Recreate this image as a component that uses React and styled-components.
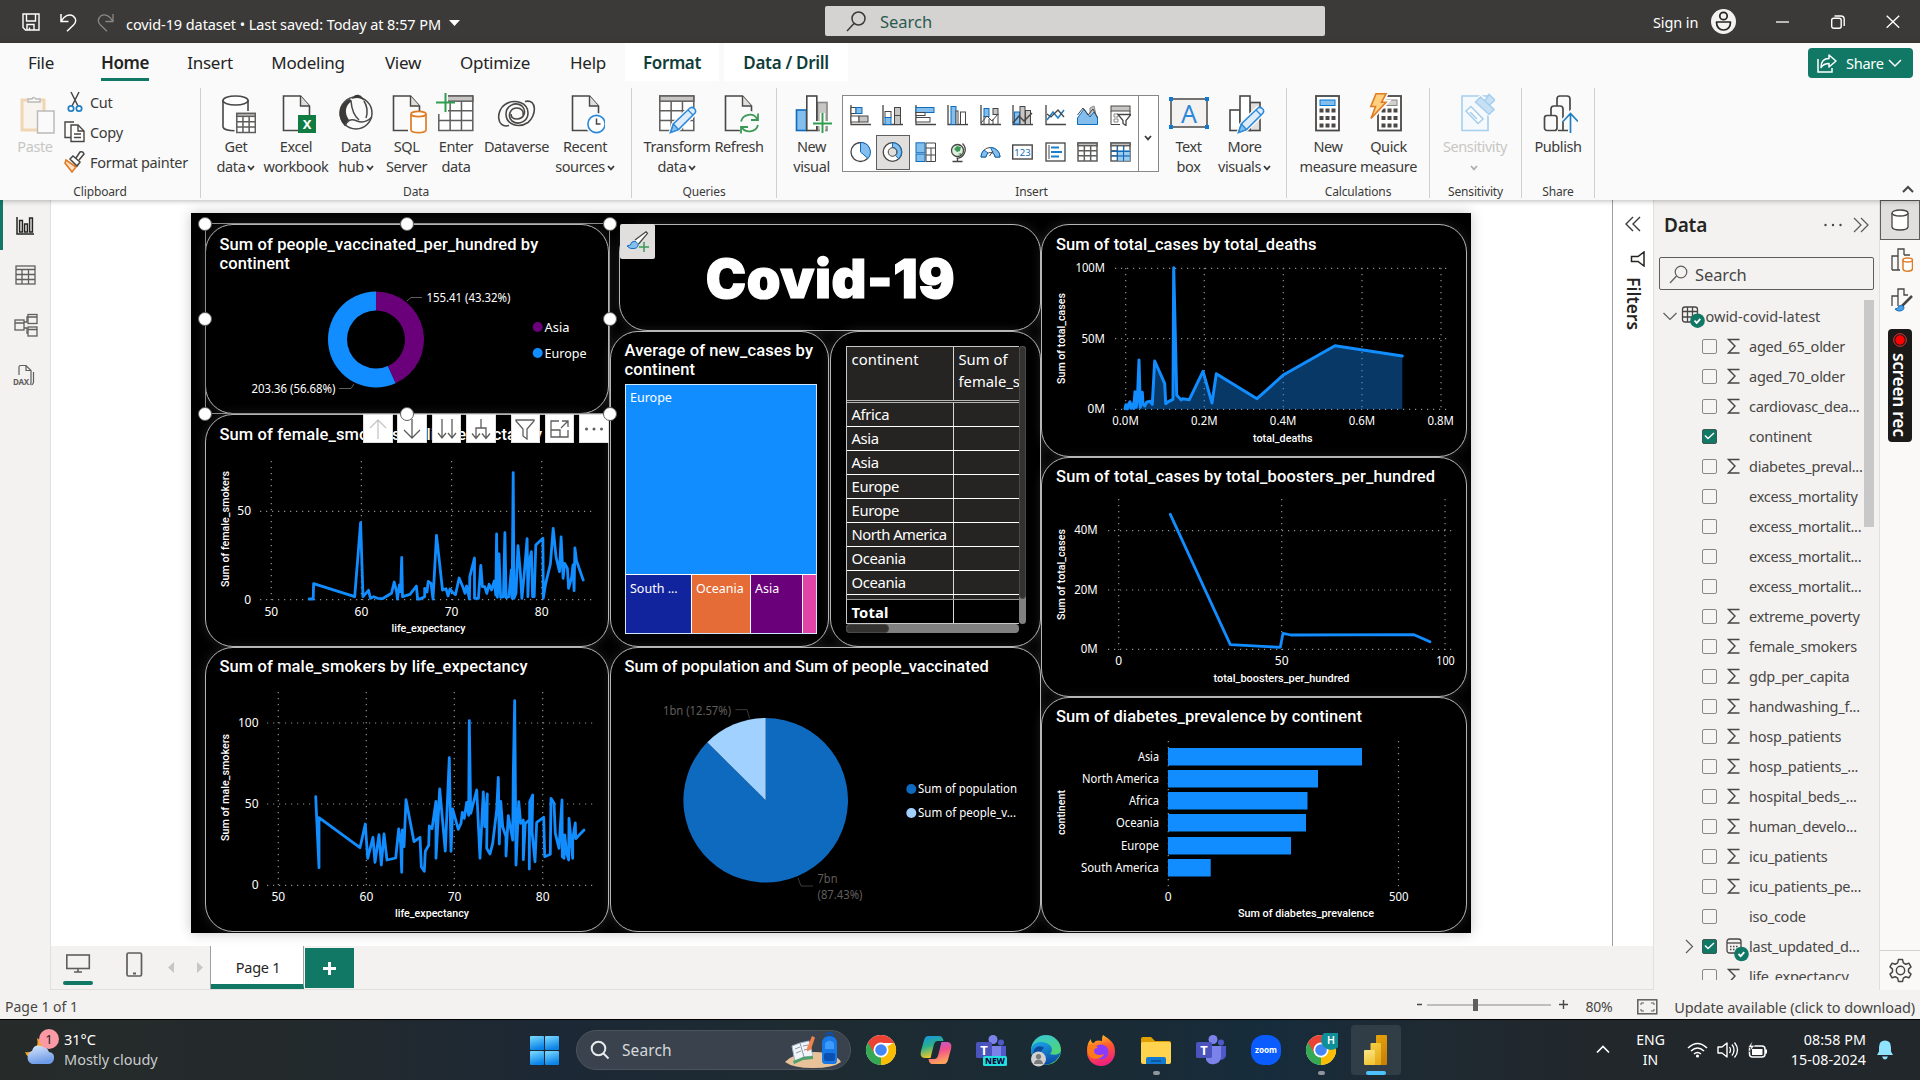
import React from "react";
import styled, { createGlobalStyle, css } from "styled-components";

const UI = `"Noto Sans", "Open Sans", sans-serif`;
const DIN = `Roboto, "Noto Sans", sans-serif`;
const BLUE = "#118dff";
const GREEN = "#117865";

const Global = createGlobalStyle`
  * { box-sizing: border-box; }
  html, body { margin: 0; padding: 0; overflow: hidden; background: #fff; }
  body { font-family: ${UI}; color: #252423; }
  svg { display: block; flex: none; }
`;

const Screen = styled.div`
  width: 1920px; height: 1080px; display: flex; flex-direction: column; overflow: hidden;
`;
const Label = styled.span`
  font-size: ${(p) => p.$size || 14.5}px;
  font-weight: ${(p) => p.$weight || 400};
  letter-spacing: ${(p) => p.$ls || 0}px;
  color: ${(p) => p.$color || "inherit"};
  margin-left: ${(p) => p.$ml || 0}px;
  line-height: 20px; white-space: nowrap;
`;
const Spacer = styled.div`flex: ${(p) => (p.$w || p.$h ? "none" : 1)}; width: ${(p) => (p.$w ? p.$w + "px" : "auto")}; height: ${(p) => (p.$h ? p.$h + "px" : "auto")};`;

const Svg = ({ w, h, children, vb }) => (
  <svg width={w} height={h} viewBox={vb || `0 0 ${w} ${h}`} fill="none">{children}</svg>
);

/* ---------- title bar ---------- */
const TitleBar = styled.header`
  height: 43px; flex: none; background: #3b3a38; color: #fff; display: flex; align-items: center;
`;
const TitleIcons = styled.div`display: flex; width: 104px; gap: 20px; padding-top: 2px; margin: 0 0 0 22px;`;
const TitleText = styled.div`display: flex; align-items: center; gap: 8px; width: 699px; padding-top: 5px;`;
const TitleSearch = styled.div`
  width: 500px; height: 30px; margin-bottom: 1px; background: #d4d3d1; border-radius: 2px; display: flex; align-items: center;
  padding: 1px 0 0 21px; gap: 14px; color: #2b5a50;
`;
const WindowTools = styled.div`display: flex; align-items: center; flex: 1; padding-left: 328px;`;

function Header() {
  return (
    <TitleBar>
      <TitleIcons>
        <Svg w={18} h={18}><g stroke="#fff" strokeWidth="1.4"><path d="M1 1h16v16H3.5L1 14.5z" /><path d="M4.5 1v7h9V1M5 17v-5.500h7V17M7.500 17v-2.500" /></g></Svg>
        <Svg w={17} h={19}><path d="M1 1v7.500h7.500M1.400 8 C4 3 9 .5 13 2.800 C17 6 16 9.500 13.500 12 L7 18.300" stroke="#fff" strokeWidth="1.500" /></Svg>
        <Svg w={17} h={19}><path d="M16 1v7.500H8.500M15.600 8 C13 3 8 .5 4 2.800 C0 6 1 9.500 3.500 12 L10 18.300" stroke="#8a8886" strokeWidth="1.300" /></Svg>
      </TitleIcons>
      <TitleText>
        <Label $size={14.5} $ls={-0.08}>covid-19 dataset • Last saved: Today at 8:57 PM</Label>
        <Svg w={11} h={10}><path d="M0 1h11l-5.500 6z" fill="#fff" /></Svg>
      </TitleText>
      <TitleSearch>
        <Svg w={20} h={21}><circle cx="12.500" cy="7.500" r="6.500" stroke="#3b3a38" strokeWidth="1.500" /><path d="M8 12.500L1 20" stroke="#3b3a38" strokeWidth="1.500" /></Svg>
        <Label $size={16.5}>Search</Label>
      </TitleSearch>
      <WindowTools>
        <Label $size={14.5} $ls={-0.1}>Sign in</Label>
        <Spacer $w={13} />
        <Svg w={25} h={25}><circle cx="12.500" cy="12.500" r="12.500" fill="#f3f2f1" /><g stroke="#252423" strokeWidth="1.700"><circle cx="12.500" cy="7" r="3.700" /><path d="M5.500 13h14c0 5-2.800 8-7 8s-7-3-7-8z" strokeLinejoin="round" /></g></Svg>
        <Spacer $w={40} />
        <Svg w={13} h={13}><path d="M0 7h13" stroke="#fff" strokeWidth="1.300" /></Svg>
        <Spacer $w={42} />
        <Svg w={14} h={14}><g stroke="#fff" strokeWidth="1.400"><rect x=".7" y="3.300" width="9.500" height="10" rx="2" /><path d="M3.500 1h6.500a3.200 3.200 0 0 1 3.200 3.200V11" /></g></Svg>
        <Spacer $w={41} />
        <Svg w={14} h={13}><path d="M.7.7l12.500 12M13.200.7L.7 12.700" stroke="#fff" strokeWidth="1.400" /></Svg>
      </WindowTools>
    </TitleBar>
  );
}

/* ---------- ribbon ---------- */
const Ribbon = styled.div`height: 157px; flex: none; background: #fafafa; display: flex; flex-direction: column; position: relative; z-index: 2; box-shadow: 0 1px 5px rgba(0,0,0,.28);`;
const TabRow = styled.nav`height: 41px; display: flex; align-items: stretch;`;
const Tab = styled.div`
  width: ${(p) => p.$w}px; margin-left: ${(p) => p.$gap || 0}px; height: 38px; display: flex; justify-content: center; align-items: center; padding-top: 1px;
  background: ${(p) => (p.$context ? "#fff" : "transparent")};
  color: ${(p) => (p.$context ? "#0f3d38" : "#252423")};
  box-shadow: ${(p) => (p.$active ? `inset 0 -3px 0 ${GREEN}` : "none")};
`;
const ShareButton = styled.button`
  width: 105px; height: 30px; margin: 5px 7px 0 auto; background: ${GREEN}; border: 0; border-radius: 4px; color: #fff; font-family: inherit;
  display: flex; align-items: center; padding: 0 0 0 9px; gap: 4px;
`;
const Groups = styled.div`height: 116px; display: flex; padding-top: 4px;`;
const Group = styled.section`
  width: ${(p) => p.$w}px; height: 110px; border-right: 1px solid #d2d0ce; display: flex; flex-direction: column;
  flex: none;
`;
const GroupBody = styled.div`display: flex; height: 94px; padding-left: ${(p) => p.$pl || 0}px;`;
const GroupName = styled.div`font-size: 12px; letter-spacing: -.15px; line-height: 16px; height: 16px; text-align: center; color: #3b3a39; padding-top: 2px;`;
const Big = styled.div`
  width: ${(p) => p.$w}px; margin-left: ${(p) => p.$ml || 0}px; flex: none; display: flex; flex-direction: column; align-items: center; padding-top: 5px; color: ${(p) => (p.$off ? "#c8c6c4" : "#3b3a39")};
`;
const BigText = styled.div`
  font-size: 14.5px; letter-spacing: -.4px; line-height: 20px; white-space: nowrap; text-align: center; margin-top: 2px;
`;
const SmallStack = styled.div`display: flex; flex-direction: column; padding-top: 0; margin-left: 6px;`;
const Small = styled.div`height: 30px; display: flex; align-items: center; gap: 4px; color: #3b3a39; padding-bottom: 2px;`;

const CaretIcon = styled.svg`&& { display: inline-block; margin-left: ${(p) => p.$ml}px; vertical-align: 1px; }`;
const Caret = ({ c = "#3b3a39", ml = 2 }) => (
  <CaretIcon $ml={ml} width="8" height="6" viewBox="0 0 8 6"><path d="M1 1l3 3.300L7 1" stroke={c} strokeWidth="1.800" fill="none" /></CaretIcon>
);
function Btn({ w, ml, icon, lines, caret, off }) {
  return (
    <Big $w={w} $ml={ml} $off={off}>
      <Svg w={40} h={41}>{icon}</Svg>
      <BigText>
        {lines[0]}<br />{lines[1]}{caret && <Caret c={off ? "#b0aeac" : undefined} ml={off ? -1 : 2} />}
      </BigText>
    </Big>
  );
}

const D = "#4a4846";
const page = (x) => (<><path d={`M${x} 3h17l9 10v24.500h-26z`} fill="#fafafa" stroke={D} strokeWidth="1.600" /><path d={`M${x + 17} 3v10h9`} stroke={D} strokeWidth="1.400" fill="#e1dfdd" /></>);
const tableGrid = (x, y, w, h) => (
  <g stroke="#605e5c" strokeWidth="1.500">
    <rect x={x} y={y} width={w} height={h} fill="#fff" />
    <rect x={x} y={y} width={w} height={h * 0.15} fill="#c8c6c4" />
    <path d={`M${x} ${y + h * 0.43}h${w}M${x} ${y + h * 0.71}h${w}M${x + w / 3} ${y + h * 0.15}v${h * 0.85}M${x + (2 * w) / 3} ${y + h * 0.15}v${h * 0.85}`} />
  </g>
);
const pencil = (
  <g>
    <path d="M13.500 40l2.500-8.500L32 15.500l5.500 5.500L21.500 36.500z" fill="#fafafa" stroke="#fafafa" strokeWidth="4" />
    <path d="M13.500 39.500l2.800-8.500L33 15q2-1.500 4.300.500t.7 4.500L21.500 36.500z" fill="#deecf9" stroke="#2b88d8" strokeWidth="1.500" />
    <path d="M16.500 31l5 5.500-8 3zM31 17l5 5" stroke="#2b88d8" strokeWidth="1.300" fill="#83beec" />
  </g>
);
const calc = (x, top) => (
  <g>
    <rect x={x} y={3} width={23} height={34.500} fill="#fff" stroke={D} strokeWidth="1.800" />
    <rect x={x + 4} y={7} width={15} height={5.500} fill={top} stroke={top === "#83beec" ? "#0078d4" : "#8a8886"} />
    {[15.500, 23, 30.500].map((y) => [0, 1, 2].map((i) => <rect key={y + "-" + i} x={x + 3.500 + i * 6} y={y} width="4" height="4" fill={D} />))}
  </g>
);
const IC = {
  paste: (<g opacity=".75"><path d="M7 7h22v30H7z" stroke="#f0c99a" strokeWidth="3" fill="#f7f3ec" /><path d="M13 9V6h4q1-3 4 0h4v3z" stroke="#a8a6a4" strokeWidth="1.500" fill="#fafafa" /><path d="M22.500 18H39v22H22.500z" fill="#fafafa" stroke="#a8a6a4" strokeWidth="1.500" /></g>),
  getData: (<><path d="M7 7v27c1 5 24 5 25 0V7" fill="#fff" stroke={D} strokeWidth="1.600" /><ellipse cx="19.500" cy="7.500" rx="12.500" ry="4.500" fill="#fff" stroke={D} strokeWidth="1.600" /><rect x="18.500" y="18" width="22" height="22" fill="#fafafa" />{tableGrid(20.800, 20.500, 18.500, 19)}</>),
  excel: (<>{page(7.500)}<rect x="22" y="22" width="18" height="18" fill="#107c41" /><text x="31" y="36" fill="#fff" fontSize="13" fontWeight="700" textAnchor="middle" fontFamily="Noto Sans, sans-serif">X</text></>),
  hub: (<g><circle cx="20" cy="20" r="16" fill="#fafafa" stroke={D} strokeWidth="1.500" /><path d="M16 6C18 0 26 0 28 8C24 4 20 5 16 6zM14 6C3 10 0 24 9 33L13 27C8 20 9 12 16 8z" fill="#3b3a39" /><path d="M15 8q1 13 8 19M28 8q5 8 2 17M9 33q3-9 12-5 8 3 15-4" stroke={D} strokeWidth="1.500" /></g>),
  sql: (<>{page(6.500)}<path d="M21 18h20v23H21z" fill="#fafafa" /><path d="M24 21v16c1 3.500 14 3.500 15 0V21" fill="#fff" stroke="#e07c24" strokeWidth="1.700" /><ellipse cx="31.500" cy="21" rx="7.500" ry="2.700" fill="#fff" stroke="#e07c24" strokeWidth="1.700" /></>),
  enter: (<>{tableGrid(2.800, 3, 34, 34.500)}<path d="M0 0h12v21H0z" fill="#fafafa" /><path d="M9.500 0v19M0 9.500h19" stroke="#2f9e4f" strokeWidth="2" /></>),
  dataverse: (<g stroke={D} strokeWidth="1.600"><path d="M12 32.500C-1 36-1 17 8 11.500 18 5 31 10 31 20c0 8-9 13-16 8-5-5-2-13 5-13 4 0 7 3 6 7" /><path d="M28 8.500c13-3 11 15 3 21C21 36 9 31 9 21c0-8 9-13 16-8 5 5 2 13-5 13-4 0-6-2-6-5" /></g>),
  recent: (<>{page(7.500)}<circle cx="31.500" cy="31" r="11" fill="#fafafa" /><circle cx="31.500" cy="31" r="8.600" fill="#fff" stroke="#2b88d8" strokeWidth="1.600" /><path d="M31.500 25.500V31h4" stroke={D} strokeWidth="1.500" /></>),
  transform: (<>{tableGrid(2.800, 3, 34, 34.500)}{pencil}</>),
  refresh: (<>{page(6.500)}<circle cx="30.500" cy="30" r="12" fill="#fafafa" /><path d="M22 28.500c2-8 13-9 16-2.500M39 20.500v6.500h-7M39 32c-2 8-13 8-16 2.500M22 40.500V34h7" stroke="#3c9a57" strokeWidth="1.800" /></>),
  newVisual: (<g strokeWidth="1.600"><rect x="25.500" y="9.500" width="9.500" height="28" fill="#c8c6c4" stroke="#8a8886" /><rect x="4.500" y="17" width="10" height="20.500" fill="#83beec" stroke="#0f6cbd" /><rect x="14.800" y="3" width="10" height="34.500" fill="#fff" stroke={D} /><path d="M30.500 20v20M21 30.500h19" stroke="#fafafa" strokeWidth="5" /><path d="M30.500 20v20M21 30.500h19" stroke="#2f9e4f" strokeWidth="1.900" /></g>),
  textBox: (<><rect x="2" y="6" width="36" height="28" fill="#f3f2f1" stroke={D} strokeWidth="1.500" />{[[0, 4], [36, 4], [0, 32], [36, 32]].map(([x, y]) => <rect key={x + "," + y} x={x} y={y} width="4" height="4" fill="#0f7ad4" />)}<text x="20" y="29.500" fontSize="25" fill="#2b88d8" textAnchor="middle" fontFamily="Noto Sans, sans-serif">A</text></>),
  more: (<><g stroke={D} strokeWidth="1.600" fill="#fff"><rect x="5" y="17" width="10" height="20.500" /><rect x="25" y="9.500" width="10" height="28" fill="#e1dfdd" /><rect x="15" y="3" width="10" height="34.500" /></g>{pencil}</>),
  newMeasure: calc(8, "#83beec"),
  quick: (<>{calc(9, "#d2d0ce")}<path d="M7 .8h10l-4.500 8.500H17L2 25.500l4.500-12H1.800z" fill="#ffd580" stroke="#fafafa" strokeWidth="5" /><path d="M7 .8h10l-4.500 8.500H17L2 25.500l4.500-12H1.800z" fill="#ffd080" stroke="#e07c24" strokeWidth="1.600" /></>),
  sens: (<g stroke="#a6cfee" strokeWidth="1.600"><path d="M7 3h26v34.500H7z" fill="#f5f9fc" /><path d="M11 18l5-4.500L28 26l-5 4.500zM15 19l7 7" fill="#fff" /><path d="M21 8L26 4l13 12-5 5z" fill="#c7e0f4" stroke="#fafafa" strokeWidth="4" /><path d="M20.500 9l5-5 13.500 12.500-5 5zM30 7.500l4-6 6 5.500-5.500 5" fill="#c7e0f4" /></g>),
  publish: (<g stroke={D} strokeWidth="1.700"><path d="M19 13V6q0-3 3-3h7q3 0 3 3v31.500H20" /><path d="M13 22v-6q0-3 3-3h6q3 0 3 3v21.500" /><rect x="6.500" y="22.500" width="12.500" height="15" rx="2.500" fill="#fafafa" /><path d="M32.500 40V21M25 28.500l7.500-8 7.500 8" stroke="#fafafa" strokeWidth="5" /><path d="M32.500 40V21M25 28.500l7.500-8 7.500 8" stroke="#1f7fc4" strokeWidth="1.700" /></g>),
};

const Gallery = styled.div`
  width: 317px; height: 77px; margin: 7px 0 0 9px; border: 1px solid #8a8886; background: #fff; display: flex; flex: none;
`;
const GalleryGrid = styled.div`display: grid; grid-template-columns: repeat(9, 32.500px); grid-template-rows: 37px 37px; padding: 1px 0 0 1px; width: 295px;`;
const Cell = styled.div`
  display: flex; align-items: center; justify-content: center; margin: 2px 0.500px;
  ${(p) => p.$on && css`background: #e1dfdd; outline: 1px solid #605e5c;`}
`;
const GalleryMore = styled.div`border-left: 1px solid #8a8886; flex: 1; display: flex; align-items: center; justify-content: center; padding-top: 8px;`;

const B = "#83beec", G = "#c8c6c4", S = "#484644";
const axis = <path d="M1 0v19.500h20" stroke={S} strokeWidth="1.300" />;
const G9 = [
  <>{axis}<g stroke={S}><rect x="1" y="2.500" width="5" height="6" fill="#fff" /><rect x="6" y="2.500" width="6" height="6" fill={B} stroke="#0f6cbd" /><rect x="1" y="11" width="8" height="6" fill="#fff" /><rect x="9" y="11" width="9" height="6" fill={G} /></g></>,
  <>{axis}<g stroke={S}><rect x="3" y="6.500" width="6" height="6" fill="#fff" /><rect x="3" y="12.500" width="6" height="7" fill={B} stroke="#0f6cbd" /><rect x="12.500" y="2.500" width="6" height="8" fill={G} /><rect x="12.500" y="10.500" width="6" height="9" fill={G} /></g></>,
  <>{axis}<g stroke={S}><rect x="1" y="2.500" width="18" height="5" fill={B} stroke="#0f6cbd" /><rect x="1" y="7.500" width="9" height="3" fill="#fff" /><rect x="1" y="12.500" width="14" height="4.500" fill="#fff" /></g></>,
  <>{axis}<g stroke={S}><rect x="4" y="1.500" width="5" height="18" fill={B} stroke="#0f6cbd" /><rect x="9" y="6" width="2" height="13.500" fill="#fff" /><rect x="13.500" y="7" width="5" height="12.500" fill="#fff" /></g></>,
  <>{axis}<g stroke={S}><rect x="4" y="3.500" width="5" height="8" fill={B} stroke="#0f6cbd" /><rect x="13" y="3.500" width="5" height="6" fill={G} /><path d="M1 18l6-7 5 5 6-7M4 11v8M9 14v5M13 14v5M18 9v10" /></g></>,
  <>{axis}<g stroke={S}><rect x="2.500" y="7" width="5" height="12" fill={B} stroke="#0f6cbd" /><rect x="8" y="1.500" width="5" height="18" fill={G} /><rect x="13.500" y="5.500" width="5" height="14" fill={G} /><path d="M1 18l6-7 5 5 8-8" strokeWidth="1.500" /></g></>,
  <>{axis}<path d="M2 15L8 7l5 6 6-8" stroke="#1f7fc4" strokeWidth="1.600" /><path d="M2 9l4 3 7-7 6 7" stroke={S} strokeWidth="1.300" /></>,
  <><path d="M13 3l4-2 4 18h-8z" fill={G} stroke="#8a8886" /><path d="M.5 13L7 4l6 8 4-5 3.500 5v7.500H.5z" fill={B} stroke="#0f6cbd" /><path d="M.5 10L6 3l5 7 5-6 4.500 9" stroke={S} /></>,
  <><rect x="1" y="1" width="19" height="5" fill={G} stroke={S} /><path d="M1 6v13.500h9M20 6v4" stroke={S} /><path d="M4 9h4v3H4zM4 14h4v3H4z" stroke="#8a8886" /><path d="M8 9.500h13l-5 6v5l-3-2v-3z" fill="#fff" stroke={S} strokeWidth="1.300" /></>,
  <><circle cx="10.500" cy="10" r="9.500" fill="#fff" stroke={S} strokeWidth="1.300" /><path d="M10.500.500v9.500l7.500 6.500A9.700 9.700 0 0 0 10.500.500z" fill={B} stroke="#0f6cbd" /></>,
  <><circle cx="10.500" cy="10" r="9.300" fill="#fff" stroke={S} strokeWidth="1.300" /><path d="M10.500.700a9.300 9.300 0 0 1 6 16l-3-3.200a4.500 4.500 0 0 0-3-8z" fill={B} stroke="#0f6cbd" /><circle cx="10.500" cy="10" r="4.300" fill="#e1dfdd" stroke={S} /></>,
  <><rect x="1" y=".800" width="9" height="10" fill={B} stroke="#0f6cbd" /><rect x="1" y="12" width="9" height="7.500" fill={B} stroke="#0f6cbd" /><path d="M11 1h9.500v18.500H11zM11 6h9.500M11 13h9.500M16 6v13" fill="#fff" stroke={S} /></>,
  <><circle cx="10.500" cy="8.500" r="6" fill="#dff0df" stroke={S} strokeWidth="1.300" /><path d="M10 4l4 1-1 4-3 1-3-3zM11 12l3-1v2z" fill="#3c9a57" /><path d="M15.500 1.500c6 6 1 15-6 14.500M10.500 16v3M5.500 19.500h10" stroke={S} strokeWidth="1.300" /></>,
  <><path d="M1 15a9.500 9.500 0 0 1 19 0h-5a4.500 4.500 0 0 0-9 0z" fill="#fff" stroke={S} /><path d="M10.500 5.500A9.500 9.500 0 0 1 20 15h-5q0-3-2-4zM1 15q0-4 3-7l4 3q-2 2-2 4z" fill={B} stroke="#0f6cbd" /><path d="M9.500 14L13 9" stroke={S} /></>,
  <><rect x=".700" y="3" width="19.500" height="14" fill="#fff" stroke={S} strokeWidth="1.400" /><text x="10.500" y="13.800" fontSize="9.500" fill="#0f6cbd" textAnchor="middle" fontFamily="Noto Sans, sans-serif">123</text></>,
  <><rect x="1" y="1" width="19" height="18" fill="#fff" stroke={S} strokeWidth="1.300" /><path d="M4 3v14" stroke={S} /><path d="M6 5.500h8M6 14.500h8" stroke="#1f7fc4" strokeWidth="2" /><path d="M6 10h11" stroke="#1f7fc4" strokeWidth="2" /></>,
  <>{tableGrid(1, 1, 19, 18)}</>,
  <>{tableGrid(1, 1, 19, 18)}<path d="M8 8h12v11H8z" fill={B} opacity=".8" /><path d="M1 9.500h19M1 14h19M7.500 4v15M13.500 4v15" stroke="#0f6cbd" /></>,
];

const Collapse = styled.div`flex: 1; display: flex; align-items: flex-end; justify-content: flex-end; padding: 0 6px 7px 0;`;

function RibbonBar() {
  const tabs = [["File", 82, 0], ["Home", 48, 19], ["Insert", 60, 31], ["Modeling", 80, 28], ["View", 50, 30], ["Optimize", 80, 27], ["Help", 50, 28]];
  return (
    <Ribbon>
      <TabRow>
        {tabs.map(([t, w, gap]) => (
          <Tab key={t} $w={w} $gap={gap} $active={t === "Home"}>
            <Label $size={17} $ls={t === "Home" ? -0.4 : -0.25} $weight={t === "Home" ? 600 : 400}>{t}</Label>
          </Tab>
        ))}
        <Tab $w={94} $gap={12} $context><Label $size={17} $ls={-0.4} $weight={600}>Format</Label></Tab>
        <Tab $w={124} $gap={5} $context><Label $size={17} $ls={-0.3} $weight={600}>Data / Drill</Label></Tab>
        <ShareButton>
          <Svg w={20} h={20}><g stroke="#fff" strokeWidth="1.500"><path d="M1 6v13h14v-4" /><path d="M12 2l7 6-7 6v-3.500c-4 0-6 1-8 4 0-6 3-9 8-9z" strokeLinejoin="round" /></g></Svg>
          <Label $size={14.6} $ls={-0.3} $ml={5}>Share</Label>
          <Svg w={14} h={9}><path d="M1 1l6 6 6-6" stroke="#fff" strokeWidth="1.500" /></Svg>
        </ShareButton>
      </TabRow>
      <Groups>
        <Group $w={201}>
          <GroupBody $pl={14}>
            <Big $w={42} $off>
              <Svg w={40} h={41}>{IC.paste}</Svg>
              <BigText>Paste</BigText>
            </Big>
            <SmallStack>
              <Small>
                <Svg w={24} h={22}><g transform="translate(2 0)"><path d="M7 1l7 14M15 1L8 15" stroke={S} strokeWidth="1.500" /><circle cx="7" cy="17.500" r="2.700" stroke="#1f7fc4" strokeWidth="1.700" /><circle cx="15" cy="17.500" r="2.700" stroke="#1f7fc4" strokeWidth="1.700" /></g></Svg>
                <Label $size={14.5} $ls={-0.3}>Cut</Label>
              </Small>
              <Small>
                <Svg w={24} h={22}><g stroke={S} strokeWidth="1.400"><path d="M9 16.500H3V1h9" /><path d="M9 4h7l6 6v10.500H9z" fill="#fff" /><path d="M16 4v6h6M12 13h7M12 16.500h7" /></g></Svg>
                <Label $size={14.5} $ls={-0.3}>Copy</Label>
              </Small>
              <Small>
                <Svg w={24} h={22}><path d="M4 9l10 7-4 5L3 12z" fill="#fbe0c3" stroke="#e07c24" strokeWidth="1.600" /><path d="M8 8l3-3 7 6-3 4zM14 7l4-6q3-1 4 2l-5 6" fill="#fff" stroke={S} strokeWidth="1.500" /></Svg>
                <Label $size={14.5} $ls={-0.3}>Format painter</Label>
              </Small>
            </SmallStack>
          </GroupBody>
          <GroupName>Clipboard</GroupName>
        </Group>
        <Group $w={431}>
          <GroupBody $pl={5}>
            <Btn w={60} icon={IC.getData} lines={["Get", "data"]} caret />
            <Btn w={60} icon={IC.excel} lines={["Excel", "workbook"]} />
            <Btn w={60} icon={IC.hub} lines={["Data", "hub"]} caret />
            <Btn w={41} icon={IC.sql} lines={["SQL", "Server"]} />
            <Btn w={58} icon={IC.enter} lines={["Enter", "data"]} />
            <Btn w={63} icon={IC.dataverse} lines={["Dataverse", ""]} />
            <Btn w={74} icon={IC.recent} lines={["Recent", "sources"]} caret />
          </GroupBody>
          <GroupName>Data</GroupName>
        </Group>
        <Group $w={145}>
          <GroupBody $pl={4}>
            <Btn w={82} icon={IC.transform} lines={["Transform", "data"]} caret />
            <Btn w={42} icon={IC.refresh} lines={["Refresh", ""]} />
          </GroupBody>
          <GroupName>Queries</GroupName>
        </Group>
        <Group $w={510}>
          <GroupBody $pl={13}>
            <Btn w={43} icon={IC.newVisual} lines={["New", "visual"]} />
            <Gallery>
              <GalleryGrid>{G9.map((g, i) => <Cell key={i} $on={i === 10}><Svg w={21} h={21}>{g}</Svg></Cell>)}</GalleryGrid>
              <GalleryMore><Caret ml={-1} /></GalleryMore>
            </Gallery>
            <Btn w={43} ml={8} icon={IC.textBox} lines={["Text", "box"]} />
            <Btn w={59} ml={5} icon={IC.more} lines={["More", "visuals"]} caret />
          </GroupBody>
          <GroupName>Insert</GroupName>
        </Group>
        <Group $w={143}>
          <GroupBody $pl={13}>
            <Btn w={56} icon={IC.newMeasure} lines={["New", "measure"]} />
            <Btn w={55} ml={5} icon={IC.quick} lines={["Quick", "measure"]} />
          </GroupBody>
          <GroupName>Calculations</GroupName>
        </Group>
        <Group $w={92}>
          <GroupBody $pl={10}><Btn w={70} icon={IC.sens} lines={["Sensitivity", ""]} caret off /></GroupBody>
          <GroupName>Sensitivity</GroupName>
        </Group>
        <Group $w={73}>
          <GroupBody $pl={4}><Btn w={64} icon={IC.publish} lines={["Publish", ""]} /></GroupBody>
          <GroupName>Share</GroupName>
        </Group>
        <Collapse><Svg w={12} h={8}><path d="M1 7l5-5 5 5" stroke={S} strokeWidth="2" /></Svg></Collapse>
      </Groups>
    </Ribbon>
  );
}

/* ---------- workspace ---------- */
const Work = styled.div`flex: 1; display: flex; min-height: 0;`;
const LeftNav = styled.nav`width: 51px; background: #f3f2f1; border-right: 1px solid #e1dfdd; display: flex; flex-direction: column; flex: none;`;
const NavItem = styled.div`height: 50px; display: flex; align-items: center; justify-content: center; border-left: 3px solid ${(p) => (p.$on ? GREEN : "transparent")}; padding-right: ${(p) => p.$pr || 2}px;`;
const Middle = styled.div`flex: 1; display: flex; flex-direction: column; min-width: 0;`;
const Stage = styled.main`height: 746px; display: flex; flex: none;`;
const CanvasWrap = styled.div`flex: 1; background: #fff; padding: 13px 0 0 140px;`;
const Report = styled.div`
  width: 1280px; height: 720px; background: #000; display: flex; padding: 11px 0 0 14px; position: relative; box-shadow: 0 0 12px rgba(0,0,0,.22);
`;
const Col = styled.div`width: ${(p) => p.$w}px; margin-right: ${(p) => p.$mr || 0}px; display: flex; flex-direction: column; flex: none;`;
const Card = styled.section`
  height: ${(p) => p.$h}px; width: ${(p) => (p.$w ? p.$w + "px" : "auto")}; margin-left: ${(p) => p.$ml || 0}px; border: 1px solid #b5b5b5; border-radius: 28px; background: #000; overflow: hidden;
  padding-top: ${(p) => p.$pt || 10}px; flex: none; box-shadow: 0 0 12px rgba(255,255,255,.12);
`;
const CardTitle = styled.h3`
  margin: 0 0 0 ${(p) => p.$ml || 13.5}px; width: ${(p) => p.$w || 405}px; font: 500 16.5px/19px ${DIN}; letter-spacing: ${(p) => p.$ls || 0}px; color: #fff;
`;
const Row = styled.div`display: flex; justify-content: space-between;`;

const Plot = ({ x, y, w, h, children }) => (
  <svg width={w} height={h} viewBox={`${x} ${y} ${w} ${h}`} fill="none">{children}</svg>
);
const T = ({ x, y, w, a = "start", size = 12, weight = 400, fill = "#fff", font = UI, rot, children }) => (
  <text x={rot ? 0 : x} y={rot ? 0 : y} transform={rot ? `translate(${x} ${y}) rotate(-90)` : undefined} textAnchor={a} textLength={w} lengthAdjust="spacingAndGlyphs" fontSize={size} fontWeight={weight} fill={fill} fontFamily={font}>{children}</text>
);
const Dots = ({ v = [], hz = [], x0, x1, y0, y1 }) => (
  <g stroke="#8f8f8f" strokeWidth="1.200" strokeDasharray="1.200 4.800">
    {v.map((x) => <path key={"v" + x} d={`M${x} ${y0}V${y1}`} />)}
    {hz.map((y) => <path key={"h" + y} d={`M${x0} ${y}H${x1}`} />)}
  </g>
);
const trace = (s, ox, oy, sx, sy) =>
  s.trim().split(/\s+/).map((p) => p.split(",").map(Number)).map(([x, y]) => `${(ox + x / sx).toFixed(1)},${(oy + y / sy).toFixed(1)}`).join(" ");

const FEMALE = trace(`782,1197 792,1197 793,1151 897,1190 912,968 918,1190 932,1171 937,1195 945,1190 955,1195 967,1196 990,1180 997,1146 1003,1175 1005,1197 1010,1155 1013,1175 1016,1072 1018,1190 1037,1183 1053,1158 1056,1197 1062,1197 1074,1190 1074,1165 1080,1176 1083,1144 1090,1150 1095,1197 1104,1006 1119,1170 1128,1166 1133,1188 1138,1167 1143,1175 1152,1184 1161,1134 1172,1165 1176,1180 1180,1158 1187,1197 1188,1130 1200,1074 1200,1195 1210,1195 1216,1096 1220,1160 1226,1160 1231,1180 1237,1153 1243,1170 1250,1143 1254,1185 1256,1002 1258,1192 1262,1062 1266,1192 1273,1190 1277,998 1280,1193 1287,1190 1293,1110 1295,1195 1298,818 1300,1195 1305,1180 1310,1037 1316,1120 1320,1195 1326,1120 1333,1016 1335,1190 1338,1085 1344,1055 1347,1190 1351,1190 1355,1035 1373,1015 1374,1194 1380,1150 1392,1092 1399,985 1406,1070 1415,1115 1419,1011 1424,1135 1428,1090 1435,1105 1438,1165 1446,1130 1449,1095 1452,1172 1454,1044 1458,1082 1475,1140`, 0, 200, 2.529, 3);
const MALE = trace(`407,470 417,683 417,533 540,623 556,552 563,655 579,592 585,667 597,584 604,675 612,582 621,660 647,654 656,567 662,612 665,697 667,570 672,620 678,479 702,605 720,592 724,680 733,694 736,634 746,616 748,558 756,566 768,484 768,655 779,447 796,633 808,353 813,634 818,507 835,568 843,550 847,517 853,535 860,487 866,526 868,242 872,520 890,450 900,655 910,456 914,560 922,462 920,625 930,642 938,610 950,510 955,412 958,612 962,484 968,560 978,590 978,648 985,527 998,600 1000,400 1004,182 1008,675 1016,485 1022,550 1030,540 1030,659 1036,550 1048,540 1048,687 1049,485 1058,465 1056,575 1065,665 1070,547 1091,532 1094,650 1111,643 1113,475 1122,490 1126,580 1137,625 1146,480 1147,650 1152,655 1154,585 1160,640 1166,660 1167,535 1178,655 1178,598 1186,549 1187,596 1212,570`, 180, 640, 3, 3);
const DEATHS = trace(`285,626 288,614 292,626 296,612 300,605 303,625 308,612 311,625 315,575 318,622 322,605 327,480 331,622 337,577 339,612 344,618 350,607 360,604 367,613 374,483 404,551 407,611 415,605 429,598 431,203 440,586 454,600 458,596 478,599 519,514 546,609 559,521 681,596 761,524 915,437 1117,468`, 1030, 200, 3, 3);
const BOOST = trace(`421,943 601,1334 751,1342 759,1300 783,1305 1152,1304 1200,1325`, 1030, 200, 3, 3);

const Line = ({ pts, w = 2.8 }) => <polyline points={pts} stroke={BLUE} strokeWidth={w} strokeLinejoin="round" strokeLinecap="round" />;
const arc = (cx, cy, r, a0, a1, ri = 0) => {
  const p = (a, q) => `${(cx + q * Math.sin(a)).toFixed(2)} ${(cy - q * Math.cos(a)).toFixed(2)}`;
  const big = a1 - a0 > Math.PI ? 1 : 0;
  return ri
    ? `M${p(a0, r)}A${r} ${r} 0 ${big} 1 ${p(a1, r)}L${p(a1, ri)}A${ri} ${ri} 0 ${big} 0 ${p(a0, ri)}Z`
    : `M${cx} ${cy}L${p(a0, r)}A${r} ${r} 0 ${big} 1 ${p(a1, r)}Z`;
};
const TAU = Math.PI * 2;

/* treemap */
const Tree = styled.div`width: 192px; height: 250px; margin: 5px 0 0 14px; border: 1px solid #cfe6ff; display: flex; flex-direction: column;`;
const Tile = styled.div`
  background: ${(p) => p.$c}; width: ${(p) => (p.$w ? p.$w + "px" : "auto")}; height: ${(p) => (p.$h ? p.$h + "px" : "auto")}; color: #fff; font-size: 12.5px; line-height: 17px; padding: 4px 0 0 4px; white-space: nowrap; overflow: hidden; flex: none;
  ${(p) => p.$line && css`border-right: 1px solid #fff; padding-top: 5px;`}
`;
const TileRow = styled.div`display: flex; flex: 1; border-top: 1px solid #fff;`;

/* table */
const TableBox = styled.div`margin: 4px 0 0 15px; display: grid; grid-template-columns: 173px 7px; grid-template-rows: 278px 9px; font-size: 14.8px; line-height: 22px; color: #fff;`;
const Rows = styled.div`border: 1px solid #c8c8c8; border-right: 0; overflow: hidden; display: flex; flex-direction: column;`;
const TR = styled.div`
  display: grid; grid-template-columns: 107px 1fr; height: ${(p) => p.$h || 24}px; flex: none; background: ${(p) => p.$bg || "#252423"};
  border-bottom: ${(p) => (p.$head ? "3px double #b5b5b5" : p.$bare ? "0" : "1px solid #fff")};
  border-top: ${(p) => (p.$total ? "1px solid #9a9a9a" : "0")};
  font-weight: ${(p) => (p.$total ? 700 : 400)};
`;
const TD = styled.div`padding: ${(p) => p.$pt || 0}px 0 0 4.500px; border-right: ${(p) => (p.$last ? 0 : 1)}px solid #d8d8d8; white-space: nowrap; overflow: hidden; letter-spacing: ${(p) => p.$ls || 0}px;`;
const VBar = styled.div`background: #808080; border-radius: 4px; &::before { content: ""; display: block; height: 251px; background: #333231; border: 1px solid #4a4846; border-radius: 4px; }`;
const HBar = styled.div`background: #808080; border-radius: 4px; display: flex; &::before { content: ""; width: 41px; background: #333231; border-radius: 4px; border: 1px solid #4a4846; }`;

const Hero = styled.div`font: 900 54px/72px Inter, "Open Sans", sans-serif; letter-spacing: .6px; color: #fff; text-align: center; padding: 9px 0 0 1px; -webkit-text-stroke: 1.200px #fff;`;

/* overlays on the selected visual */
const Handles = styled.div`position: absolute; left: 14px; top: 10px; width: 405px; height: 191px; border: 1px solid #8a8a8a;`;
const Knob = styled.i`position: absolute; width: 14px; height: 14px; border-radius: 50%; background: #fff; border: 1px solid #605e5c; left: ${(p) => p.$x - 8}px; top: ${(p) => p.$y - 7}px;`;
const VisualTools = styled.div`position: absolute; left: 172px; top: 201px; display: flex; gap: 4.900px;`;
const Tool = styled.div`width: 29.500px; height: 29px; background: #fff; margin-left: ${(p) => p.$ml || 0}px; border: 1px solid #e1dfdd; display: flex; align-items: center; justify-content: center;`;
const BrushButton = styled.div`position: absolute; left: 429px; top: 11px; width: 35px; height: 35px; background: #e1dfdd; border-radius: 2px; display: flex; align-items: center; justify-content: center;`;

const tools = [
  [<path d="M10 21V2M2 10l8-8 8 8" stroke="#c8c6c4" strokeWidth="1.300" />],
  [<path d="M10 1v19M2 12l8 8 8-8" />],
  [<path d="M5 1v19M1 15l4 5 4-5M15 1v19M11 15l4 5 4-5" />],
  [<path d="M10 1v9M5 20V10h10v10M1 15.500l4 5 4-5M11 15.500l4 5 4-5" />],
  [<path d="M1 2h18v1l-7 8v10l-4-3v-7L1 3z" />, 10],
  [<path d="M9 3H1v16h17v-7M1 12h9v7M12 3h6v6M18 3l-7 7" />],
  [<g fill="#605e5c" stroke="none"><circle cx="2.500" cy="11" r="1.500" /><circle cx="10" cy="11" r="1.500" /><circle cx="17.500" cy="11" r="1.500" /></g>],
];

function Dashboard() {
  const bars = [["Asia", 748, 1362], ["North America", 770, 1318], ["Africa", 792, 1307.5], ["Oceania", 814, 1306], ["Europe", 837, 1291], ["South America", 859, 1210.7]];
  const LW = { Asia: 21, "North America": 77, Africa: 30, Oceania: 43, Europe: 38, "South America": 78 };
  return (
    <Report>
      <Col $w={404} $mr={1}>
        <Card $h={190}>
          <CardTitle $w={345} $ls={0.1}>Sum of people_vaccinated_per_hundred by continent</CardTitle>
          <Plot x={206} y={273} w={402} h={140}>
            <path d={arc(376, 339.5, 48, 0, TAU * 0.4332, 29)} fill="#6b007b" />
            <path d={arc(376, 339.5, 48, TAU * 0.4332, TAU * 0.9999, 29)} fill={BLUE} />
            <path d="M407 301l4-3.500h11M354 384l-3 4.500h-12" stroke="#605e5c" />
            <T x={426.5} y={302} w={84}>155.41 (43.32%)</T>
            <T x={251.5} y={393} w={84}>203.36 (56.68%)</T>
            <circle cx="537.700" cy="327" r="5" fill="#6b007b" /><circle cx="537.700" cy="353" r="5" fill={BLUE} />
            <T x={544.5} y={332} w={25} size={12.5}>Asia</T><T x={544.5} y={358} w={42} size={12.5}>Europe</T>
          </Plot>
        </Card>
        <Card $h={233}>
          <CardTitle $ls={0.1}>Sum of female_smokers by life_expectancy</CardTitle>
          <Plot x={206} y={444} w={402} h={202}>
            <Dots v={[271.3, 361.4, 451.6, 541.7]} hz={[511.3, 599.7]} x0={260} x1={592} y0={461} y1={600} />
            <Line pts={FEMALE} />
            <T x={251} y={515} a="end">50</T><T x={251} y={604} a="end">0</T>
            {[50, 60, 70, 80].map((n, i) => <T key={n} x={271.3 + i * 90.13} y={616} a="middle">{n}</T>)}
            <T x={391.5} y={632} w={74} size={10.5} weight={500} font={DIN}>life_expectancy</T>
            <T x={229} y={587} w={116} size={10.5} weight={500} font={DIN} rot>Sum of female_smokers</T>
          </Plot>
        </Card>
        <Card $h={285} $pt={9}>
          <CardTitle $ls={0.1}>Sum of male_smokers by life_expectancy</CardTitle>
          <Plot x={206} y={676} w={402} h={255}>
            <Dots v={[278.3, 366.3, 454.3, 542.7]} hz={[723, 804, 885.3]} x0={267} x1={593} y0={692} y1={886} />
            <Line pts={MALE} />
            <T x={258.5} y={727} a="end">100</T><T x={258.5} y={808} a="end">50</T><T x={258.5} y={889} a="end">0</T>
            {[50, 60, 70, 80].map((n, i) => <T key={n} x={278.3 + i * 88.13} y={901} a="middle">{n}</T>)}
            <T x={395} y={917} w={74} size={10.5} weight={500} font={DIN}>life_expectancy</T>
            <T x={229} y={841} w={107} size={10.5} weight={500} font={DIN} rot>Sum of male_smokers</T>
          </Plot>
        </Card>
      </Col>

      <Col $w={431}>
        <Card $h={107} $ml={9} $pt={9}><Hero>Covid-19</Hero></Card>
        <Row>
          <Card $h={316} $w={219} $pt={9}>
            <CardTitle $w={200} $ml={13.5} $ls={0.12}>Average of new_cases by continent</CardTitle>
            <Tree>
              <Tile $c={BLUE} $h={189}>Europe</Tile>
              <TileRow>
                <Tile $c="#12239e" $w={66} $line>South ...</Tile>
                <Tile $c="#e66c37" $w={59} $line>Oceania</Tile>
                <Tile $c="#6b007b" $w={52} $line>Asia</Tile>
                <Tile $c="#e044a7" $w={13} />
              </TileRow>
            </Tree>
          </Card>
          <Card $h={316} $w={211}>
            <TableBox>
              <Rows>
                <TR $h={56} $head><TD $pt={1} $ls={0.1}>continent</TD><TD $pt={1} $last>Sum of<br />female_s</TD></TR>
                {["Africa", "Asia", "Asia", "Europe", "Europe", "North America", "Oceania", "Oceania"].map((c, i) => (
                  <TR key={i}><TD $ls={c === "North America" ? -0.5 : -0.35}>{c}</TD><TD $last /></TR>
                ))}
                <TR $h={4} $bare><TD /><TD $last /></TR>
                <TR $h={25} $bg="#000" $total $bare><TD $pt={1} $ls={0.1}>Total</TD><TD $last /></TR>
              </Rows>
              <VBar />
              <HBar />
            </TableBox>
          </Card>
        </Row>
        <Card $h={285} $pt={9}>
          <CardTitle $ml={13.5} $ls={-0.02}>Sum of population and Sum of people_vaccinated</CardTitle>
          <Plot x={611} y={676} w={429} h={255}>
            <path d={arc(765.7, 800.3, 82.3, 0, TAU * 0.8743)} fill="#0d6abf" />
            <path d={arc(765.7, 800.3, 82.3, TAU * 0.8743, TAU)} fill="#a0d1ff" />
            <path d="M749.500 718l-2.500-8.300h-11.500M798 878l3 8h12" stroke="#3b3a39" />
            <T x={663} y={715} w={68} fill="#605e5c">1bn (12.57%)</T>
            <T x={817.5} y={883} w={20} fill="#605e5c">7bn</T><T x={817.5} y={899} w={45} fill="#605e5c">(87.43%)</T>
            <circle cx="911.300" cy="789" r="5" fill="#0d6abf" /><circle cx="911.300" cy="813" r="5" fill="#a0d1ff" />
            <T x={918} y={793} w={99}>Sum of population</T><T x={918} y={817} w={98}>Sum of people_v...</T>
          </Plot>
        </Card>
      </Col>

      <Col $w={426}>
        <Card $h={233}>
          <CardTitle $ml={14} $ls={0.1}>Sum of total_cases by total_deaths</CardTitle>
          <Plot x={1042} y={254} w={424} h={201}>
            <Dots v={[1125.7, 1204.3, 1283.3, 1362, 1441]} hz={[268.3, 338.7, 409.3]} x0={1115} x1={1447} y0={268} y1={410} />
            <path d={`M1125 409.300L${DEATHS.split(" ").join("L")}L1402.300 409.300Z`} fill={BLUE} fillOpacity=".4" />
            <Line pts={DEATHS} w={3} />
            <T x={1105} y={272} a="end" w={29.5}>100M</T><T x={1105} y={343} a="end" w={23.5}>50M</T><T x={1105} y={413} a="end" w={17.500}>0M</T>
            {["0.0M", "0.2M", "0.4M", "0.6M", "0.8M"].map((n, i) => <T key={n} x={1125.5 + i * 78.8} y={425} w={26.5} a="middle">{n}</T>)}
            <T x={1253} y={441.5} w={59.5} size={10.5} weight={500} font={DIN}>total_deaths</T>
            <T x={1065} y={384} w={91} size={10.5} weight={500} font={DIN} rot>Sum of total_cases</T>
          </Plot>
        </Card>
        <Card $h={240} $pt={9}>
          <CardTitle $ml={14} $ls={0.16}>Sum of total_cases by total_boosters_per_hundred</CardTitle>
          <Plot x={1042} y={486} w={424} h={209}>
            <Dots v={[1118.7, 1281.7, 1445]} hz={[530.7, 590, 649.3]} x0={1108} x1={1452} y0={499} y1={650} />
            <Line pts={BOOST} />
            <T x={1097.7} y={534} a="end" w={23.5}>40M</T><T x={1097.7} y={594} a="end" w={23.5}>20M</T><T x={1097.7} y={653} a="end" w={17}>0M</T>
            <T x={1118.7} y={665} a="middle">0</T><T x={1281.7} y={665} a="middle">50</T><T x={1445.5} y={665} a="middle" w={18.500}>100</T>
            <T x={1213.5} y={682} w={136} size={10.5} weight={500} font={DIN}>total_boosters_per_hundred</T>
            <T x={1065} y={620} w={91} size={10.5} weight={500} font={DIN} rot>Sum of total_cases</T>
          </Plot>
        </Card>
        <Card $h={235} $pt={9}>
          <CardTitle $ml={14} $ls={0.08}>Sum of diabetes_prevalence by continent</CardTitle>
          <Plot x={1042} y={726} w={424} h={205}>
            <Dots v={[1168.3, 1398.5]} y0={741} y1={888} />
            {bars.map(([n, y, x1]) => (
              <g key={n}>
                <rect x="1168" y={y} width={x1 - 1168} height="17.500" fill={BLUE} />
                <T x={1159} y={y + 13} a="end" w={LW[n]}>{n}</T>
              </g>
            ))}
            <T x={1168.3} y={901} a="middle">0</T><T x={1398.7} y={901} a="middle" w={19.500}>500</T>
            <T x={1238} y={917} w={136} size={10.5} weight={500} font={DIN}>Sum of diabetes_prevalence</T>
            <T x={1065} y={835} w={45} size={10.5} weight={500} font={DIN} rot>continent</T>
          </Plot>
        </Card>
      </Col>

      <BrushButton>
        <Svg w={24} h={22}><path d="M1 15q4 0 5-4 3-2 6 1 1 5-4 5.500-4 1-7-2.500z" fill="#83beec" stroke="#0f6cbd" /><path d="M9 9L20 .800l1.500 1.500L12.500 13" fill="#fff" stroke={S} strokeWidth="1.300" /><path d="M18 11v10M13 16h10" stroke="#3c9a57" strokeWidth="1.500" /></Svg>
      </BrushButton>
      <VisualTools>
        {tools.map(([d, ml], i) => <Tool key={i} $ml={ml}><Svg w={20} h={22}><g stroke="#605e5c" strokeWidth="1.300">{d}</g></Svg></Tool>)}
      </VisualTools>
      <Handles>
        {[0, 202, 405].map((x) => [0, 95, 190].map((y) => !(x === 202 && y === 95) && <Knob key={x + "-" + y} $x={x} $y={y} />))}
      </Handles>
    </Report>
  );
}

/* page tabs */
const PageBar = styled.div`height: 44px; flex: none; background: #f3f2f1; display: flex; align-items: stretch; border-bottom: 1px solid #e1dfdd;`;
const ViewIcons = styled.div`width: 160px; display: flex; padding: 6px 0 0 13px; border-right: 1px solid #a19f9d;`;
const PageTab = styled.div`width: 93px; background: #fff; border-bottom: 5px solid ${GREEN}; display: flex; justify-content: center; align-items: center; padding: 4px 0 0 2px; border-right: 1px solid #a19f9d;`;
const AddPage = styled.div`width: 49px; height: 40px; margin-top: 2px; background: ${GREEN}; display: flex; align-items: center; justify-content: center; margin-left: 1px;`;
const ViewIcon = styled.div`width: ${(p) => p.$w}px; display: flex; flex-direction: column; align-items: center; flex: none;`;
const ActiveBar = styled.div`width: 30px; height: 4px; border-radius: 2px; background: ${GREEN}; margin-top: 8px;`;
const Phone = styled.div`padding-left: 11px;`;
const Pager = styled.div`display: flex; gap: 23px; padding: 10px 0 0 3px;`;

function Pages() {
  return (
    <PageBar>
      <ViewIcons>
        <ViewIcon $w={28}>
          <Svg w={25} h={21}><rect x=".800" y="3" width="22.500" height="13.500" stroke="#605e5c" strokeWidth="1.600" /><path d="M12 17v3.500M8 20h8" stroke="#605e5c" strokeWidth="1.600" /></Svg>
          <ActiveBar />
        </ViewIcon>
        <ViewIcon $w={73}>
          <Phone><Svg w={17} h={26}><rect x="1" y="1" width="14.500" height="23" rx="1.500" stroke="#605e5c" strokeWidth="1.700" /><path d="M7 21.500h3" stroke="#605e5c" strokeWidth="2" /></Svg></Phone>
        </ViewIcon>
        <Pager>
          <Svg w={6} h={11}><path d="M0 5.500L6 0v11z" fill="#c8c6c4" /></Svg>
          <Svg w={6} h={11}><path d="M6 5.500L0 0v11z" fill="#c8c6c4" /></Svg>
        </Pager>
      </ViewIcons>
      <PageTab><Label $size={14.5} $ls={-0.3}>Page 1</Label></PageTab>
      <AddPage><Svg w={15} h={15}><path d="M7.500 1v13M1 7.500h13" stroke="#fff" strokeWidth="3" /></Svg></AddPage>
    </PageBar>
  );
}

/* filter + data panes */
const Filters = styled.aside`width: 41px; flex: none; background: #fff; border-left: 1px solid #a19f9d; display: flex; flex-direction: column; align-items: center; padding: 16px 0 0 0;`;
const Funnel = styled.div`padding-left: 8px; margin: 19px 0 10px;`;
const Vertical = styled.div`writing-mode: vertical-rl; font-size: ${(p) => p.$size}px; font-weight: ${(p) => p.$weight}; line-height: 20px; letter-spacing: ${(p) => p.$ls || 0}px; white-space: nowrap; padding-left: ${(p) => p.$pl || 0}px;`;
const DataPane = styled.aside`width: 227px; flex: none; background: #f3f2f1; border-left: 1px solid #e1dfdd; border-right: 1px solid #e1dfdd; display: flex; flex-direction: column; padding-left: 5px;`;
const PaneHead = styled.div`height: 57px; display: flex; align-items: center; padding: 0 10px 7px 5px; gap: 11px;`;
const PaneSearch = styled.div`width: 215px; height: 33px; border: 1px solid #605e5c; border-radius: 2px; display: flex; align-items: center; gap: 7px; padding: 2px 0 0 9px;`;
const ListWrap = styled.div`display: flex; margin-top: 10px; height: 680px; overflow: hidden;`;
const List = styled.div`width: 205px; flex: none;`;
const Thumb = styled.div`width: 10px; height: 227px; background: #c8c8c8;`;
const Root = styled.div`height: 31px; display: flex; align-items: center; padding: 1px 0 0 4px;`;
const Field = styled.div`height: 30px; display: flex; align-items: center; padding-left: 21px; color: #484644;`;
const Check = styled.span`
  width: 15px; height: 15px; flex: none; border: 1px solid ${(p) => (p.$on ? "#3b5a52" : "#8a8886")}; border-radius: 2px; background: ${(p) => (p.$on ? GREEN : "#f6f5f4")}; display: flex; align-items: center; justify-content: center;
`;
const Exp = styled.span`width: 22px; flex: none; padding-left: 5px;`;
const Kind = styled.span`width: 32px; flex: none; padding: ${(p) => (p.$date ? "7px 0 0 9px" : "0 0 0 10px")};`;

const FIELDS = [["aged_65_older", 1], ["aged_70_older", 1], ["cardiovasc_dea...", 1], ["continent", 0, 1], ["diabetes_preval...", 1], ["excess_mortality", 0], ["excess_mortalit...", 0], ["excess_mortalit...", 0], ["excess_mortalit...", 0], ["extreme_poverty", 1], ["female_smokers", 1], ["gdp_per_capita", 1], ["handwashing_f...", 1], ["hosp_patients", 1], ["hosp_patients_...", 1], ["hospital_beds_...", 1], ["human_develo...", 1], ["icu_patients", 1], ["icu_patients_pe...", 1], ["iso_code", 0], ["last_updated_d...", 2, 1], ["life_expectancy", 1]];

function Panes() {
  return (
    <DataPane>
      <PaneHead>
        <Label $size={19} $weight={600} $ls={-0.2}>Data</Label>
        <Spacer />
        <Svg w={18} h={4}><g fill="#484644"><circle cx="1.500" cy="2" r="1.200" /><circle cx="9" cy="2" r="1.200" /><circle cx="16.500" cy="2" r="1.200" /></g></Svg>
        <Svg w={16} h={16}><path d="M1 1l7 7-7 7M8 1l7 7-7 7" stroke="#605e5c" strokeWidth="1.300" /></Svg>
      </PaneHead>
      <PaneSearch>
        <Svg w={19} h={19}><circle cx="12" cy="7" r="5.800" stroke="#605e5c" strokeWidth="1.200" /><path d="M7.500 11L1 18" stroke="#605e5c" strokeWidth="1.200" /></Svg>
        <Label $size={16.5} $ls={-0.1} $color="#484644">Search</Label>
      </PaneSearch>
      <ListWrap>
        <List>
          <Root>
            <Svg w={14} h={9}><path d="M.500 1l6.500 6.500L13.500 1" stroke="#605e5c" strokeWidth="1.200" /></Svg>
            <Svg w={28} h={24}><g stroke="#484644" strokeWidth="1.300"><rect x="5.500" y="3" width="15" height="15" rx="2.500" /><path d="M5.500 7.500h15M5.500 13h15M10.500 3v15M15.500 3v15" /></g><circle cx="20.500" cy="16.700" r="7.300" fill={GREEN} /><path d="M17.500 16.700l2.200 2.200 3.600-4" stroke="#fff" strokeWidth="1.800" /></Svg>
            <Label $size={14.5} $ls={0} $ml={0.5} $color="#484644">owid-covid-latest</Label>
          </Root>
          {FIELDS.map(([n, kind, on], i) => (
            <Field key={i}>
              <Exp>{kind === 2 && <Svg w={9} h={15}><path d="M1 1l6.500 6.500L1 14" stroke="#605e5c" strokeWidth="1.200" /></Svg>}</Exp>
              <Check $on={on}>{on ? <Svg w={13} h={12}><path d="M2 5.500l3 3L11 3" stroke="#fff" strokeWidth="1.400" /></Svg> : null}</Check>
              <Kind $date={kind === 2}>
                {kind === 1 && <Svg w={13} h={17}><path d="M12.500 1.500H1.500L8 8 1.500 15H12.500" stroke="#484644" strokeWidth="1.400" /></Svg>}
                {kind === 2 && <Svg w={24} h={24}><g stroke="#484644" strokeWidth="1.300"><rect x="1" y="1" width="14" height="14" rx="2.500" /><path d="M1 5h14" /><path d="M4 8.500h8M4 11.500h8" strokeDasharray="1.500 1.500" /></g><g transform="translate(8 9)"><circle cx="7.500" cy="7" r="7.300" fill={GREEN} /><path d="M4.500 7l2.200 2.200 3.600-4" stroke="#fff" strokeWidth="1.800" /></g></Svg>}
              </Kind>
              <Label $size={14.5} $ls={-0.25}>{n}</Label>
            </Field>
          ))}
        </List>
        <Thumb />
      </ListWrap>
    </DataPane>
  );
}

const Rail = styled.aside`width: 40px; flex: none; background: #faf9f8; display: flex; flex-direction: column; align-items: center;`;
const RailItem = styled.div`width: 40px; height: 40px; display: flex; align-items: center; justify-content: center; padding-left: ${(p) => (p.$on ? 0 : 3)}px; ${(p) => p.$on && css`background: #e1dfdd; border: 1px solid #605e5c;`}`;
const Recorder = styled.div`width: 24px; height: 113px; margin-top: 9px; border-radius: 4px; background: #1b1a19; color: #fff; display: flex; flex-direction: column; align-items: center; padding-top: 4px; gap: 6px;`;
const Gear = styled.div`margin-top: auto; width: 40px; height: 40px; border-top: 1px solid #d2d0ce; display: flex; align-items: center; justify-content: center;`;

/* status bar */
const Status = styled.footer`height: 29px; flex: none; background: #f3f2f1; display: flex; align-items: center; padding: 4px 5px 0 5px; color: #484644;`;
const ZoomTrack = styled.div`padding-bottom: 2px;`;

/* taskbar */
const Taskbar = styled.div`
  height: 61px; flex: none; border-top: 1px solid #000; background: linear-gradient(90deg, #262b2a 0, #242a2c 280px, #1c2835 560px, #1e2b31 800px, #192b36 1150px, #162c3c 1270px, #1e2a33 1400px, #22272b 1600px, #22272b 100%);
  display: flex; align-items: center; color: #fff;
`;
const Weather = styled.div`display: flex; width: 530px; padding: 0 0 2px 25px; gap: 5px; align-items: center;`;
const TwoLines = styled.div`font-size: ${(p) => p.$size || 14.5}px; line-height: 20px; letter-spacing: ${(p) => p.$ls || 0}px; text-align: ${(p) => p.$align || "left"}; white-space: nowrap; & > div:last-child { color: ${(p) => p.$c2 || "#fff"}; }`;
const TaskSearch = styled.div`
  width: 275px; height: 40px; border-radius: 20px; background: #3a434d; border: 1px solid #4b535c; margin: 0 2px 0 17px; display: flex; align-items: center; padding: 0 8px 0 13px; color: #d5d8db;
`;
const TaskApp = styled.div`
  width: 50px; height: 50px; margin-right: 5px; border-radius: 4px; display: flex; flex-direction: column; align-items: center; padding-top: 8px; flex: none;
  background: ${(p) => (p.$on ? "rgba(255,255,255,.09)" : "transparent")};
`;
const Run = styled.i`width: ${(p) => p.$w}px; height: 4px; border-radius: 2px; background: ${(p) => p.$c}; margin-top: 4px;`;
const Tray = styled.div`margin-left: auto; display: flex; align-items: center; padding: 0 27px 1px 0;`;

const chrome = (
  <g>
    <circle cx="17" cy="17" r="15" fill="#fff" />
    <path d="M17 17L30 9.500A15 15 0 0 1 17 32z" fill="#fbbc04" />
    <path d="M17 17v15A15 15 0 0 1 4 9.500z" fill="#34a853" />
    <path d="M4 9.500l6.500 11 6.500-10.500h13.300L30 9.500A15 15 0 0 0 4 9.500z" fill="#ea4335" />
    <circle cx="17" cy="17" r="7.500" fill="#fff" /><circle cx="17" cy="17" r="5.800" fill="#4285f4" />
  </g>
);
const teams = (
  <g>
    <circle cx="27" cy="9.500" r="3" fill="#5059c9" /><circle cx="19" cy="6.500" r="4.500" fill="#7b83eb" />
    <path d="M21 13h11v9a5 5 0 0 1-7 4.500z" fill="#5059c9" /><path d="M12 13h15v11a8 8 0 0 1-15 3z" fill="#7b83eb" />
    <rect x="2" y="9" width="16" height="16" rx="1.500" fill="#4b53bc" />
    <text x="10" y="21.500" fontSize="13" fontWeight="700" fill="#fff" textAnchor="middle" fontFamily="Noto Sans, sans-serif">T</text>
  </g>
);
const TASK = [
  [chrome],
  [<g><path d="M9 3h11c3 0 4 2 4.500 5l-5 0c-3 0-4 1-5 5l-3 12H6c-4 0-5-3-4-7L4.500 9C5.500 5 6.500 3 9 3z" fill="url(#cpA)" /><path d="M25 31H14c-3 0-4-2-4.500-5h5c3 0 4-1 5-5l3-12H28c4 0 5 3 4 7l-2.500 9C28.500 29 27.500 31 25 31z" fill="url(#cpB)" /></g>],
  [<g>{teams}<rect x="9" y="23" width="24" height="10" rx="1.500" fill="#22e0e0" /><text x="21" y="31.300" fontSize="9" fontWeight="800" fill="#003" textAnchor="middle" fontFamily="Noto Sans, sans-serif" textLength="20" lengthAdjust="spacingAndGlyphs">NEW</text></g>],
  [<g><circle cx="17" cy="17" r="15" fill="url(#edA)" /><path d="M2 19C2 8 12 8 17 10c7 2 7 8 4 11 5 2 10 0 11-3C30 30 14 37 6 27z" fill="url(#edB)" /><path d="M15 15c-6 4-3 14 6 16C10 33 2 25 5 17c3-5 8-4 10-2z" fill="#0a4a9c" /><circle cx="9.500" cy="26" r="7.500" fill="#d0d0d0" /><circle cx="9.500" cy="23.500" r="2.600" fill="#7a7a7a" /><path d="M5 31c0-6 9-6 9 0z" fill="#7a7a7a" /></g>],
  [<g><path d="M19 2c7 5 12 7 12 17a14 14 0 0 1-28 0C3 13 4 9 7 6c0 3 1 4 3 4 1-3 5-3 8-2 0-2 0-4 1-6z" fill="url(#ffA)" /><circle cx="17" cy="19" r="7.500" fill="#8b3bff" /><path d="M4 12c5-1 8 0 10 3-3 0-4 1-4 3 0 4 6 5 10 3-2 6-14 7-16-1z" fill="#ff7a18" /></g>],
  [<g><path d="M2 6q0-2 2-2h8l4 4h14q2 0 2 2v4H2z" fill="#e0a100" /><rect x="2" y="9" width="30" height="22" rx="2" fill="#ffd34e" /><path d="M7 31v-5q0-2 2-2h16q2 0 2 2v5z" fill="#1379d0" /><path d="M12 28h10" stroke="#0a4f92" strokeWidth="1.500" /></g>, "#8f959b", 7],
  [teams],
  [<g><rect x="2" y="2" width="30" height="30" rx="13" fill="#0b5cff" /><text x="17" y="20" fontSize="9.500" fontWeight="700" fill="#fff" textAnchor="middle" fontFamily="Noto Sans, sans-serif" textLength="22" lengthAdjust="spacingAndGlyphs">zoom</text></g>],
  [<g>{chrome}<circle cx="27" cy="7" r="10" fill="#0f8f98" /><text x="27" y="11" fontSize="10.500" fontWeight="600" fill="#fff" textAnchor="middle" fontFamily="Noto Sans, sans-serif">H</text></g>, "#8f959b", 7],
  [<g><rect x="17" y="2" width="11" height="30" rx="1" fill="url(#pbA)" /><rect x="11.500" y="10" width="10.500" height="22" rx="1" fill="url(#pbB)" /><rect x="5" y="17" width="11" height="15" rx="1" fill="url(#pbC)" /></g>, "#4cc2ff", 20],
];
const grad = (id, a, b, c) => (
  <linearGradient id={id} x1="0" y1="0" x2=".3" y2="1"><stop offset="0" stopColor={a} />{c && <stop offset=".5" stopColor={c} />}<stop offset="1" stopColor={b} /></linearGradient>
);

function TaskbarRow() {
  return (
    <Taskbar>
      <Weather>
        <Svg w={34} h={40}>
          <defs>
            {grad("cloud", "#dbe9fb", "#6f9be8")}{grad("cpA", "#1b8fe8", "#f0c828", "#27b08d")}{grad("cpB", "#b05ee8", "#ffa35c", "#f0508a")}
            {grad("edA", "#36c6d8", "#57d95a")}{grad("edB", "#1aa7e8", "#0d4fa8")}{grad("ffA", "#ffe226", "#f0247a", "#ff5a2a")}
            {grad("pbA", "#e8a30c", "#c98208")}{grad("pbB", "#f6cf45", "#e5ab1c")}{grad("pbC", "#f9e589", "#f2c83a")}{grad("win", "#7fdcff", "#0a84e8")}
          </defs>
          <path d="M12 9q2 8-3 12-4 3-9 2 2 6 9 6 10 0 10-9 0-7-7-11z" fill="#f5a623" />
          <path d="M7 35a7 7 0 0 1 0-13q2-7 9-5 6 0 8 6 6 1 5 7-1 5-6 5z" fill="url(#cloud)" />
          <circle cx="24" cy="10" r="10" fill="#fb9aa5" /><text x="24" y="14.500" fontSize="13" fill="#1b1a19" textAnchor="middle" fontFamily="Noto Sans, sans-serif">1</text>
        </Svg>
        <TwoLines $ls={0} $c2="#c9cccf"><div>31°C</div><div>Mostly cloudy</div></TwoLines>
      </Weather>
      <Svg w={29} h={29}><g fill="url(#win)"><rect width="14" height="14" rx="1" /><rect x="15" width="14" height="14" rx="1" /><rect y="15" width="14" height="14" rx="1" /><rect x="15" y="15" width="14" height="14" rx="1" /></g></Svg>
      <TaskSearch>
        <Svg w={20} h={20}><circle cx="8.500" cy="8.500" r="6.800" stroke="#e8eaec" strokeWidth="2" /><path d="M13.500 13.500l5 5" stroke="#e8eaec" strokeWidth="2" /></Svg>
        <Label $size={15.5} $ml={12} $ls={0.1}>Search</Label>
        <Spacer />
        <Svg w={58} h={38}>
          <path d="M1 31q10-10 30-10t26 10q-8 6-28 6T1 31z" fill="#e8c39a" />
          <path d="M8 15l8-3 9-2 4 15-9 1-9 5z" fill="#f2f4f8" stroke="#9db4cf" /><path d="M9 30l10-4 10-1v3l-10 1-9 4z" fill="#4fa06a" /><path d="M16 12l4 14M11 18l5-2M12 22l5-2M19 15l5-1M20 19l5-1" stroke="#8a97a8" />
          <path d="M23 17l5-12 3 1.500-4 12-4 2z" fill="#f0824a" />
          <path d="M38 13q0-8 7.500-8t7.500 8v16q0 4-3 4h-9q-3 0-3-4z" fill="#1779e8" /><path d="M42 6q0-4 3.500-4T49 6" stroke="#0b4fb0" strokeWidth="1.800" /><path d="M41 12q4.500-5 9 0v6h-9z" fill="#3d9bff" /><rect x="40" y="22" width="11" height="8" rx="2" fill="#0b4fb0" />
        </Svg>
      </TaskSearch>
      <Spacer $w={3} />
      {TASK.map(([d, c, w], i) => (
        <TaskApp key={i} $on={i === 9}>
          <Svg w={34} h={34}>{d}</Svg>
          {c && <Run $c={c} $w={w} />}
        </TaskApp>
      ))}
      <Tray>
        <Svg w={14} h={9}><path d="M1 7.500l6-6 6 6" stroke="#fff" strokeWidth="1.700" /></Svg>
        <Spacer $w={26} />
        <TwoLines $align="center" $size={14}><div>ENG</div><div>IN</div></TwoLines>
        <Spacer $w={22} />
        <Svg w={21} h={17}><g stroke="#fff" strokeWidth="1.600"><path d="M1 7q9.500-9 19 0M4 10q6.500-6 13 0M7 13q3.500-3 7 0" /></g><circle cx="10.500" cy="15" r="1.600" fill="#fff" /></Svg>
        <Spacer $w={9} />
        <Svg w={22} h={18}><path d="M1 6h4l5-4v14l-5-4H1z" stroke="#fff" strokeWidth="1.400" strokeLinejoin="round" /><path d="M12.500 6q2 3 0 6M15 3.500q4 5.500 0 11M17.500 1.500q6 7.500 0 15" stroke="#fff" strokeWidth="1.300" /></Svg>
        <Spacer $w={8} />
        <Svg w={21} h={18}><rect x="2.500" y="5" width="15.500" height="11" rx="3" stroke="#fff" strokeWidth="1.500" /><path d="M5 8h10.500v6H5z" fill="#fff" /><path d="M19 8.500v4" stroke="#fff" strokeWidth="2" /><path d="M5.500 0L1 6.500h3L2.500 11 7.500 4.500H4.500z" fill="#fff" stroke="#22272b" strokeWidth=".600" /></Svg>
        <Spacer $w={23} />
        <TwoLines $align="right" $size={14.3} $ls={0.05}><div>08:58 PM</div><div>15-08-2024</div></TwoLines>
        <Spacer $w={11} />
        <Svg w={16} h={20}><path d="M8 .500q6 0 6 7v4l2 3.500H0L2 11.500v-4q0-7 6-7zM5 16.500h6q-1 3-3 3t-3-3z" fill="#8fe3ff" /></Svg>
      </Tray>
    </Taskbar>
  );
}

const N = "#605e5c";
export default function App() {
  return (
    <Screen>
      <Global />
      <Header />
      <RibbonBar />
      <Work>
        <LeftNav>
          <NavItem $on><Svg w={19} h={19}><path d="M1 1v17h17" stroke="#252423" strokeWidth="1.500" /><path d="M3.500 4.500h3V16h-3zM8.500 8h3v8h-3zM13.500 2h3v14h-3z" stroke="#252423" strokeWidth="1.300" fill="#c8c6c4" /></Svg></NavItem>
          <NavItem><Svg w={21} h={20}><g stroke={N} strokeWidth="1.300"><rect x="1" y="1" width="19" height="18" /><path d="M1 4.500h19M1 9.500h19M1 14.500h19M7 4.500V19M13.500 4.500V19" /></g></Svg></NavItem>
          <NavItem><Svg w={24} h={24}><g stroke={N} strokeWidth="1.300"><rect x="1" y="7" width="9" height="10" /><path d="M1 10h9M10 9h3V4h1M10 15h3v5h1M14 4h9M14 16.500h9" /><rect x="14" y="1.500" width="9" height="9" /><rect x="14" y="14" width="9" height="9" /></g></Svg></NavItem>
          <NavItem $pr={5}><Svg w={22} h={22}><path d="M6 11V3q0-1.500 1.500-1.500H13l5 5V19q0 1.500-1.500 1.500M13 1.500v5h5M20.500 8v10q0 2-2 3" stroke={N} strokeWidth="1.200" /><text x="0" y="20.500" fontSize="8" fontWeight="700" fill={N} textLength="16" fontFamily="Noto Sans, sans-serif">DAX</text></Svg></NavItem>
        </LeftNav>
        <Middle>
          <Stage>
            <CanvasWrap><Dashboard /></CanvasWrap>
            <Filters>
              <Svg w={16} h={16}><path d="M8 1L1 8l7 7M15 1L8 8l7 7" stroke="#3b3a39" strokeWidth="1.400" /></Svg>
              <Funnel><Svg w={15} h={16}><path d="M14 1v14L8 10.500H1.500v-5H8z" stroke="#252423" strokeWidth="1.500" /></Svg></Funnel>
              <Vertical $size={17.6} $weight={600} $pl={2}>Filters</Vertical>
            </Filters>
          </Stage>
          <Pages />
        </Middle>
        <Panes />
        <Rail>
          <RailItem $on><Svg w={18} h={22}><path d="M1 4v14c1 4 15 4 16 0V4" stroke={S} strokeWidth="1.300" fill="#fff" /><ellipse cx="9" cy="4" rx="8" ry="3" stroke={S} strokeWidth="1.300" fill="#fff" /></Svg></RailItem>
          <RailItem><Svg w={22} h={24}><path d="M1 22V8h6M7 22V1h6v6M13 7h6M1 22h8" stroke={S} strokeWidth="1.300" /><path d="M12 12v9c1 3 8.500 3 9.500 0v-9" stroke="#e07c24" strokeWidth="1.500" fill="#fff" /><ellipse cx="16.700" cy="12" rx="4.800" ry="2" stroke="#e07c24" strokeWidth="1.500" fill="#fff" /></Svg></RailItem>
          <RailItem><Svg w={22} h={24}><path d="M1 18V8h6M7 18V1h6v6h4" stroke={S} strokeWidth="1.300" /><path d="M21 8L11 18" stroke={S} strokeWidth="2.500" /><path d="M4 21q3 0 4-3 3-2 5 1 0 4-5 4-2 0-4-2z" fill="#4ba0e8" stroke="#0f6cbd" /></Svg></RailItem>
          <Recorder>
            <Svg w={14} h={14}><circle cx="7" cy="7" r="6.300" stroke="#e33" /><circle cx="7" cy="7" r="4.700" fill="#f00" /></Svg>
            <Vertical $size={17.4} $weight={600} $ls={-0.3}>screen rec</Vertical>
          </Recorder>
          <Gear><Svg w={25} h={25} vb="0 0 24 24"><g stroke={S} strokeWidth="1.400"><circle cx="12" cy="12" r="4" /><path d="M10 1.500h4l.700 3.200 2.300 1.300 3.100-1 2 3.500-2.400 2.200v2.600l2.400 2.200-2 3.500-3.100-1-2.300 1.300-.700 3.200h-4l-.700-3.200L7 18l-3.100 1-2-3.500 2.400-2.200v-2.600L1.900 8.500l2-3.500L7 6l2.300-1.300z" strokeLinejoin="round" /></g></Svg></Gear>
        </Rail>
      </Work>
      <Status>
        <Label $size={14}>Page 1 of 1</Label>
        <Spacer />
        <ZoomTrack><Svg w={154} h={16}><path d="M-1 6.500h6M142 6.500h9M146.500 2v9" stroke={S} strokeWidth="1.400" /><path d="M10 7h124" stroke="#8a8886" /><rect x="56" y="1" width="5" height="12" fill="#605e5c" /></Svg></ZoomTrack>
        <Spacer $w={15} />
        <Label $size={14} $ls={-0.3}>80%</Label>
        <Spacer $w={25} />
        <Svg w={21} h={16}><rect x=".800" y=".800" width="19" height="14" stroke={N} strokeWidth="1.500" /><path d="M4 6V4h3M14 4h3v2M4 10v2h3M14 12h3v-2" stroke={N} /></Svg>
        <Label $size={14.5} $ls={-0.1} $ml={16}>Update available (click to download)</Label>
      </Status>
      <TaskbarRow />
    </Screen>
  );
}
